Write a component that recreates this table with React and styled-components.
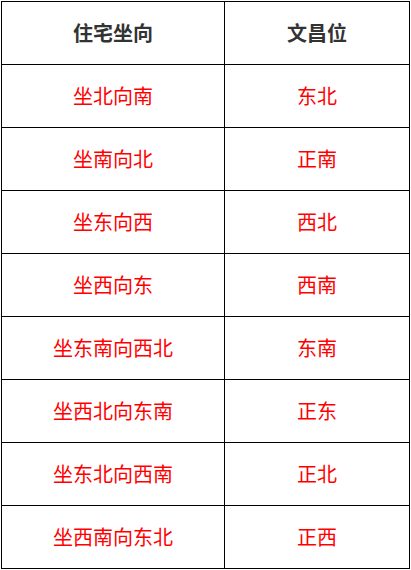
import styled, { createGlobalStyle } from "styled-components";

const GlobalStyle = createGlobalStyle`
    body {
        margin: 0;
        background: #fff;
        font-family: "Noto Sans CJK SC", "Noto Sans", sans-serif;
    }
`;

const Wrapper = styled.div`
    padding: 1px 0 0 1px;
`;

const Table = styled.div`
    display: inline-grid;
    grid-template-columns: 222px 184px;
    grid-auto-rows: 62px;
    gap: 1px;
    padding: 1px;
    background: #000;
`;

const Cell = styled.div`
    display: flex;
    align-items: center;
    justify-content: center;
    background: #fff;
    font-size: 20px;
    line-height: 1;
    color: ${props => props.head ? "#333" : "#ff0000"};
    font-weight: ${props => props.head ? 700 : 400};
`;

const rows = [
    ["坐北向南", "东北"],
    ["坐南向北", "正南"],
    ["坐东向西", "西北"],
    ["坐西向东", "西南"],
    ["坐东南向西北", "东南"],
    ["坐西北向东南", "正东"],
    ["坐东北向西南", "正北"],
    ["坐西南向东北", "正西"],
];

const App = () => {
    return (
        <Wrapper>
            <GlobalStyle />
            <Table>
                <Cell head>住宅坐向</Cell>
                <Cell head>文昌位</Cell>
                {rows.map(([facing, spot], i) => [
                    <Cell key={`f${i}`}>{facing}</Cell>,
                    <Cell key={`s${i}`}>{spot}</Cell>,
                ])}
            </Table>
        </Wrapper>
    );
};

export default App;
